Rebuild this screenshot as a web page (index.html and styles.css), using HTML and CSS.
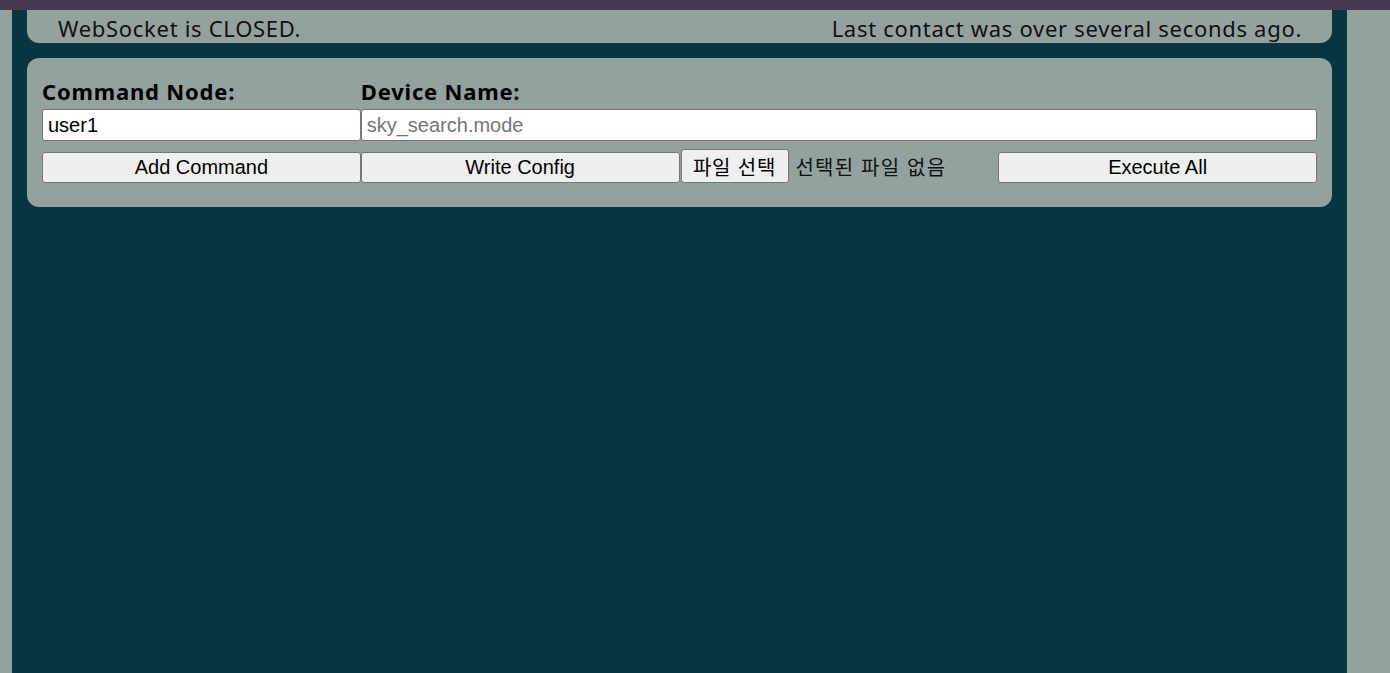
FILE: index.html
```html
<!DOCTYPE html>
<html lang="ko">
<head>
<meta charset="utf-8">
<title>Command Console</title>
<link rel="stylesheet" href="styles.css">
</head>
<body>
<div class="topbar"></div>
<div class="page">
  <main class="container">
    <div class="status">
      <span>WebSocket is CLOSED.</span>
      <span>Last contact was over several seconds ago.</span>
    </div>
    <section class="panel">
      <div class="grid">
        <label class="label" for="node">Command Node:</label>
        <label class="label span3" for="device">Device Name:</label>
        <input id="node" class="field" type="text" value="user1">
        <input id="device" class="field span3" type="text" placeholder="sky_search.mode">
        <button class="btn">Add Command</button>
        <button class="btn">Write Config</button>
        <div class="file">
          <button class="filebtn">파일 선택</button>
          <span class="filename">선택된 파일 없음</span>
        </div>
        <button class="btn">Execute All</button>
      </div>
    </section>
  </main>
</div>
</body>
</html>
```

FILE: styles.css
```css
html, body {
  margin: 0;
  padding: 0;
  height: 100%;
  background: #93a19f;
  overflow: hidden;
}
body {
  font-family: "Noto Sans", "Noto Sans CJK KR", sans-serif;
}
.topbar {
  height: 10px;
  background: #453a51;
}
.page {
  padding: 0 43px 0 12px;
  height: calc(100% - 10px);
}
.container {
  background: #073642;
  height: 100%;
  padding: 0 15px;
  box-sizing: border-box;
}
.status {
  height: 33px;
  box-sizing: border-box;
  background: #93a19f;
  border-radius: 0 0 12px 12px;
  display: flex;
  justify-content: space-between;
  align-items: center;
  padding: 3px 30px 0 31px;
  font-size: 22px;
  letter-spacing: 0.7px;
  color: #111;
  line-height: 1;
}
.panel {
  margin-top: 15px;
  background: #93a19f;
  border-radius: 12px;
  padding: 19px 15px 24px;
}
.grid {
  display: grid;
  grid-template-columns: repeat(4, 1fr);
  column-gap: 0;
}
.span3 {
  grid-column: span 3;
}
.label {
  font-weight: 700;
  font-size: 22px;
  letter-spacing: 0.8px;
  line-height: 1;
  color: #000;
  padding: 3px 0 7px;
}
.field {
  height: 32px;
  box-sizing: border-box;
  border: 1px solid #767676;
  border-radius: 3px;
  background: #fff;
  font-family: "Liberation Sans", Arial, sans-serif;
  font-size: 20px;
  padding: 0 5px;
  color: #000;
  margin: 0;
}
.field::placeholder {
  color: #757575;
}
.btn {
  margin-top: 11px;
  height: 31px;
  border: 1px solid #767676;
  border-radius: 3px;
  background: #efefef;
  font-family: "Liberation Sans", Arial, sans-serif;
  font-size: 20px;
  color: #000;
  padding: 0;
}
.file {
  display: flex;
  align-items: center;
  margin-top: 8px;
  height: 34px;
}
.filebtn {
  height: 34px;
  width: 108px;
  margin-left: 1px;
  border: 1px solid #767676;
  border-radius: 3px;
  background: #efefef;
  font-family: "Noto Sans CJK KR", sans-serif;
  font-size: 20px;
  letter-spacing: 0.8px;
  color: #000;
  padding: 0;
}
.filename {
  margin-left: 7px;
  font-family: "Noto Sans CJK KR", sans-serif;
  font-size: 20px;
  letter-spacing: 1.2px;
  color: #111;
}
```
